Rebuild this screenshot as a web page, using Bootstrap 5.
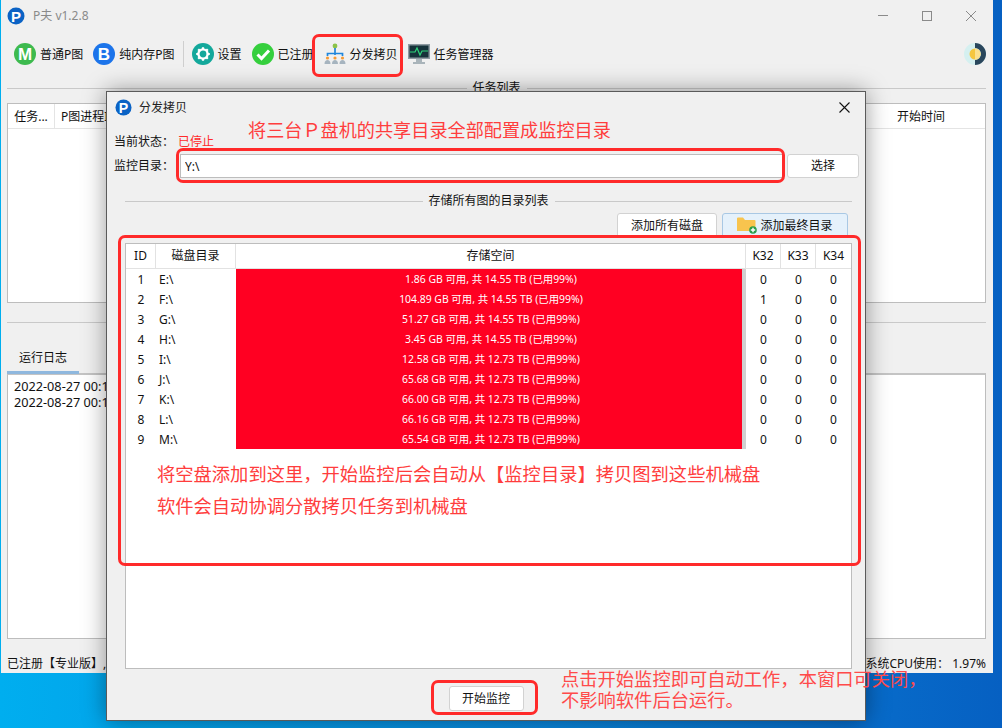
<!DOCTYPE html>
<html lang="zh">
<head>
<meta charset="utf-8">
<title>P夫 v1.2.8</title>
<link href="https://cdn.jsdelivr.net/npm/bootstrap@5.3.0/dist/css/bootstrap.min.css" rel="stylesheet">
<style>
html,body{height:100%}
body{position:relative;width:1002px;height:728px;overflow:hidden;background:linear-gradient(90deg,#00aeef 0,#0a86dc 55%,#0660c2 100%);font:12px/1.3 "Noto Sans","Noto Sans CJK SC",sans-serif;color:#111}
.win-main{position:absolute;left:1px;top:0;width:992px;height:673px;background:#f0f0f0;padding:0 7px 0 6px;display:flex;flex-direction:column}
.win-title{height:32px;color:#8a8a8a;font-size:12px}
.win-ctrl{margin-left:auto;gap:34px;padding-right:10px}
.tool-bar{height:44px;padding-left:7px}
.tool-item{display:flex;align-items:center;gap:4px;margin-right:10px;white-space:nowrap;line-height:18px}
.tool-item span{padding-top:1px}
.tool-sep{width:1px;height:26px;background:#cfcfcf;margin:0 8px 0 -2px}
.line-title{height:24px;gap:6px}
.rule{flex:1;height:1px;background:#c9c9c9}
.box-w{background:#fff;border:1px solid #bdbdbd}
.task-box{height:200px;margin-top:3px}
.task-head{height:25px;border-bottom:1px solid #e4e4e4}
.task-head>div{padding-top:5px;border-right:1px solid #e4e4e4}
.hcell-a{width:47px;text-align:center}
.hcell-b{width:90px;padding-left:6px;white-space:nowrap;overflow:hidden}
.hcell-c{width:128px;border-right:0!important;margin-left:auto;text-align:center}
.sep-line{height:1px;background:#c9c9c9;margin-top:19px}
.tab-row{height:50px;display:flex;align-items:flex-end}
.tab-label{width:72px;height:28px;text-align:center;border-bottom:3px solid #8fb8de;padding-top:4px;margin-bottom:-1px;position:relative}
.log-box{height:266px;border-top:2px solid #c4c4c4;padding:3px 6px;line-height:16px;font-size:12.7px;white-space:nowrap}
.status-row{height:34px;padding-top:17px}
.win-dialog{position:absolute;left:106px;top:91px;width:760px;height:630px;background:#f0f0f0;border:1px solid #5a5a5a;box-shadow:0 0 22px rgba(0,0,0,.4);display:flex;flex-direction:column}
.dlg-title{height:31px;padding:0 15px 0 8px;gap:7px;font-size:12px;color:#222}
.dlg-status{height:22px;margin:8px 0 0 7px}
.red-t{color:#ff2b2b}
.status-label{width:64px}
.dlg-form{margin:1px 6px 0 7px;height:24px}
.dlg-label{width:66px}
.dir-input.form-control{width:603px;height:24px;min-height:0;padding:0 4px;font-size:12px;border:1px solid #bdbdbd;border-radius:0;color:#111;margin-right:4px;font-family:inherit}
.win-btn.btn{font-size:12px;height:24px;padding:0;background:#fff;border:1px solid #d2d2d2;border-radius:3px;color:#111;line-height:22px}
.btn-pick{width:72px}
.line-dlg{height:20px;margin:13px 13px 0 18px;gap:6px}
.dlg-actions{margin:2px 17px 0 0;gap:5px;height:25px}
.btn-all{width:100px;height:25px!important}
.win-btn.btn-last{width:126px;height:25px;background:#e5f1fb;border-color:#a9c8e4;display:flex;align-items:center;justify-content:center;gap:3px}
.disk-box{width:727px;height:426px;margin:5px 0 0 18px}
.disk-table.table{table-layout:fixed;width:725px;margin:0;font-size:12px;--bs-table-bg:transparent;border-collapse:separate;border-spacing:0}
.disk-table th,.disk-table td{padding:0;text-align:center;vertical-align:middle;border:0;font-weight:400;color:#111}
.disk-table th{height:25px;border-bottom:1px solid #e2e2e2;border-right:1px solid #e2e2e2}
.disk-table th:last-child{border-right:0}
.disk-table td{height:20px;padding-top:1px}
.disk-table td.bar-cell{padding-top:0}
.disk-table td.dir-cell{text-align:left;padding-left:3px}
.col-id{width:30px}.col-dir{width:80px}.col-space{width:510px}.col-k{width:35px}
.disk-bar.progress{height:20px;border-radius:0;background:#d0d0d0;font-size:10.4px}
.disk-bar .progress-bar{background:#ff0022;color:#fff;overflow:visible;padding:1px 0 0 4px}
.dlg-foot{margin-top:17px}
.btn-start{width:75px;height:25px!important}
.mark-box{position:absolute;border:3px solid #ff2a2a;border-radius:7px;pointer-events:none}
.mark-tool{left:312px;top:34px;width:91px;height:43px}
.mark-dir{left:176px;top:148px;width:609px;height:35px}
.mark-table{left:118px;top:235px;width:743px;height:331px}
.mark-start{left:431px;top:680px;width:107px;height:35px}
.note-t{position:absolute;color:#ff3d3d;font-size:18.3px;line-height:24px;white-space:nowrap}
.note-top{left:248px;top:118px;font-size:18.15px}
.note-a{left:157px;top:462px}
.note-c{left:157px;top:494px}
.note-b{left:561px;top:668px;line-height:21px;color:#ff4a4a}
</style>
</head>
<body>

<section class="win-main">
  <div class="win-title d-flex align-items-center gap-2">
    <svg width="18" height="18" viewBox="0 0 18 18"><circle cx="9" cy="9" r="8.5" fill="#0b63c5"/><text x="9" y="14.500" font-size="15" font-weight="700" text-anchor="middle" fill="#fff" font-family="Liberation Sans">P</text></svg>
    <span>P夫 v1.2.8</span>
    <div class="win-ctrl d-flex align-items-center">
      <svg width="10" height="10" viewBox="0 0 10 10"><path d="M0 4.500H10" stroke="#8a8a8a"/></svg>
      <svg width="10" height="10" viewBox="0 0 10 10"><rect x=".5" y=".5" width="9" height="9" fill="none" stroke="#8a8a8a"/></svg>
      <svg width="10" height="10" viewBox="0 0 10 10"><path d="M0 0L10 10M10 0L0 10" stroke="#8a8a8a"/></svg>
    </div>
  </div>

  <div class="tool-bar d-flex align-items-center">
    <div class="tool-item"><svg width="22" height="22" viewBox="0 0 22 22"><circle cx="11" cy="11" r="11" fill="#3dba4e"/><text x="11" y="17" font-size="17" font-weight="700" text-anchor="middle" fill="#fff" font-family="Liberation Sans">M</text></svg><span>普通P图</span></div>
    <div class="tool-item"><svg width="22" height="22" viewBox="0 0 22 22"><circle cx="11" cy="11" r="11" fill="#1c74ea"/><text x="11" y="17" font-size="17" font-weight="700" text-anchor="middle" fill="#fff" font-family="Liberation Sans">B</text></svg><span>纯内存P图</span></div>
    <div class="tool-sep"></div>
    <div class="tool-item"><svg width="22" height="22" viewBox="0 0 22 22"><circle cx="11" cy="11" r="11" fill="#13a89b"/><circle cx="11" cy="11" r="4.600" fill="none" stroke="#fff" stroke-width="2.400"/><path d="M11 4.200v2.400M11 15.400v2.400M4.200 11h2.400M15.400 11h2.400M6.200 6.200l1.700 1.700M14.100 14.100l1.700 1.700M15.800 6.200l-1.700 1.700M7.900 14.100l-1.700 1.700" stroke="#fff" stroke-width="2.200"/></svg><span>设置</span></div>
    <div class="tool-item"><svg width="22" height="22" viewBox="0 0 22 22"><circle cx="11" cy="11" r="11" fill="#35cf3d"/><path d="M5.500 11.500l4 4 7.500-8" fill="none" stroke="#fff" stroke-width="3"/></svg><span>已注册</span></div>
    <div class="tool-item"><svg width="22" height="22" viewBox="0 0 22 22"><circle cx="11" cy="3" r="2.400" fill="#8bc34a"/><path d="M11 5v7M3.500 13v-2.500h15V13" fill="none" stroke="#1f86dc" stroke-width="1.700"/><circle cx="3.500" cy="15" r="1.600" fill="#f59a35"/><circle cx="11" cy="15" r="1.600" fill="#f59a35"/><circle cx="18.500" cy="15" r="1.600" fill="#f59a35"/><path d="M.5 21c0-3 1.500-4 3-4s3 1 3 4zM8 21c0-3 1.500-4 3-4s3 1 3 4zM15.500 21c0-3 1.500-4 3-4s3 1 3 4z" fill="#a6b4bf"/></svg><span>分发拷贝</span></div>
    <div class="tool-item"><svg width="22" height="22" viewBox="0 0 22 22"><rect x="0" y="1" width="22" height="15" fill="#8d9aa1"/><rect x="1.500" y="2.500" width="19" height="12" fill="#16323a"/><path d="M2 9h5l2-4 3 7 2-4h6" fill="none" stroke="#2fd37a" stroke-width="1.200"/><path d="M8 16h6v3H8zM5 19h12v2H5z" fill="#a9b4ba"/></svg><span>任务管理器</span></div>
    <svg class="ms-auto" width="22" height="22" viewBox="0 0 22 22"><circle cx="11" cy="11" r="11" fill="#d5f0f0"/><path d="M11 0a11 11 0 0 1 0 22v-5a6 6 0 0 0 0-12z" fill="#29465c"/><circle cx="11" cy="11" r="5.500" fill="#f5c63f"/><path d="M11 5.500a5.500 5.500 0 0 1 0 11z" fill="#fbe08e"/></svg>
  </div>

  <div class="line-title d-flex align-items-center"><div class="rule"></div><span>任务列表</span><div class="rule"></div></div>

  <div class="task-box box-w">
    <div class="task-head d-flex">
      <div class="hcell-a">任务...</div>
      <div class="hcell-b">P图进程ID</div>
      <div class="hcell-c">开始时间</div>
    </div>
  </div>

  <div class="sep-line"></div>
  <div class="tab-row"><div class="tab-label">运行日志</div></div>
  <div class="log-box box-w">
    <div>2022-08-27 00:12:26</div>
    <div>2022-08-27 00:12:26</div>
  </div>
  <div class="status-row d-flex justify-content-between">
    <span>已注册【专业版】,</span>
    <span>系统CPU使用： 1.97%</span>
  </div>
</section>

<section class="win-dialog">
  <div class="dlg-title d-flex align-items-center">
    <svg width="17" height="17" viewBox="0 0 18 18"><circle cx="9" cy="9" r="8.500" fill="#0b63c5"/><text x="9" y="14.500" font-size="15" font-weight="700" text-anchor="middle" fill="#fff" font-family="Liberation Sans">P</text></svg>
    <span>分发拷贝</span>
    <svg class="ms-auto" width="11" height="11" viewBox="0 0 11 11"><path d="M.5 .5L10.500 10.500M10.500 .5L.5 10.500" stroke="#111" stroke-width="1.100"/></svg>
  </div>
  <div class="dlg-status d-flex align-items-center"><span class="status-label flex-shrink-0">当前状态：</span><span class="red-t">已停止</span></div>
  <div class="dlg-form d-flex align-items-center">
    <span class="dlg-label flex-shrink-0">监控目录：</span>
    <input class="form-control dir-input" value="Y:\">
    <button class="btn win-btn btn-pick" type="button">选择</button>
  </div>
  <div class="line-dlg d-flex align-items-center"><div class="rule"></div><span>存储所有图的目录列表</span><div class="rule"></div></div>
  <div class="dlg-actions d-flex justify-content-end">
    <button class="btn win-btn btn-all" type="button">添加所有磁盘</button>
    <button class="btn win-btn btn-last" type="button"><svg width="20" height="17" viewBox="0 0 20 17"><path d="M0 1.500a1 1 0 0 1 1-1h5l2 2.500h9.500a1 1 0 0 1 1 1V14H0z" fill="#f8c44e"/><circle cx="16" cy="13" r="3.800" fill="#2a9d4b"/><path d="M16 10.800v4.400M13.800 13h4.400" stroke="#fff" stroke-width="1.400"/></svg>添加最终目录</button>
  </div>
  <div class="disk-box box-w">
    <table class="table disk-table">
      <colgroup><col class="col-id"><col class="col-dir"><col class="col-space"><col class="col-k"><col class="col-k"><col class="col-k"></colgroup>
      <thead><tr><th>ID</th><th>磁盘目录</th><th>存储空间</th><th>K32</th><th>K33</th><th>K34</th></tr></thead>
      <tbody>
        <tr><td>1</td><td class="dir-cell">E:\</td><td class="bar-cell"><div class="progress disk-bar"><div class="progress-bar" style="width:99.2%">1.86 GB 可用, 共 14.55 TB (已用99%)</div></div></td><td>0</td><td>0</td><td>0</td></tr>
        <tr><td>2</td><td class="dir-cell">F:\</td><td class="bar-cell"><div class="progress disk-bar"><div class="progress-bar" style="width:99.2%">104.89 GB 可用, 共 14.55 TB (已用99%)</div></div></td><td>1</td><td>0</td><td>0</td></tr>
        <tr><td>3</td><td class="dir-cell">G:\</td><td class="bar-cell"><div class="progress disk-bar"><div class="progress-bar" style="width:99.2%">51.27 GB 可用, 共 14.55 TB (已用99%)</div></div></td><td>0</td><td>0</td><td>0</td></tr>
        <tr><td>4</td><td class="dir-cell">H:\</td><td class="bar-cell"><div class="progress disk-bar"><div class="progress-bar" style="width:99.2%">3.45 GB 可用, 共 14.55 TB (已用99%)</div></div></td><td>0</td><td>0</td><td>0</td></tr>
        <tr><td>5</td><td class="dir-cell">I:\</td><td class="bar-cell"><div class="progress disk-bar"><div class="progress-bar" style="width:99.2%">12.58 GB 可用, 共 12.73 TB (已用99%)</div></div></td><td>0</td><td>0</td><td>0</td></tr>
        <tr><td>6</td><td class="dir-cell">J:\</td><td class="bar-cell"><div class="progress disk-bar"><div class="progress-bar" style="width:99.2%">65.68 GB 可用, 共 12.73 TB (已用99%)</div></div></td><td>0</td><td>0</td><td>0</td></tr>
        <tr><td>7</td><td class="dir-cell">K:\</td><td class="bar-cell"><div class="progress disk-bar"><div class="progress-bar" style="width:99.2%">66.00 GB 可用, 共 12.73 TB (已用99%)</div></div></td><td>0</td><td>0</td><td>0</td></tr>
        <tr><td>8</td><td class="dir-cell">L:\</td><td class="bar-cell"><div class="progress disk-bar"><div class="progress-bar" style="width:99.2%">66.16 GB 可用, 共 12.73 TB (已用99%)</div></div></td><td>0</td><td>0</td><td>0</td></tr>
        <tr><td>9</td><td class="dir-cell">M:\</td><td class="bar-cell"><div class="progress disk-bar"><div class="progress-bar" style="width:99.2%">65.54 GB 可用, 共 12.73 TB (已用99%)</div></div></td><td>0</td><td>0</td><td>0</td></tr>
      </tbody>
    </table>
  </div>
  <div class="dlg-foot d-flex justify-content-center"><button class="btn win-btn btn-start" type="button">开始监控</button></div>
</section>

<div class="mark-box mark-tool"></div>
<div class="mark-box mark-dir"></div>
<div class="mark-box mark-table"></div>
<div class="mark-box mark-start"></div>
<div class="note-t note-top">将三台Ｐ盘机的共享目录全部配置成监控目录</div>
<div class="note-t note-a">将空盘添加到这里，开始监控后会自动从【监控目录】拷贝图到这些机械盘</div>
<div class="note-t note-c">软件会自动协调分散拷贝任务到机械盘</div>
<div class="note-t note-b">点击开始监控即可自动工作，本窗口可关闭，<br>不影响软件后台运行。</div>
<script src="https://cdn.jsdelivr.net/npm/bootstrap@5.3.0/dist/js/bootstrap.bundle.min.js"></script>
</body>
</html>
